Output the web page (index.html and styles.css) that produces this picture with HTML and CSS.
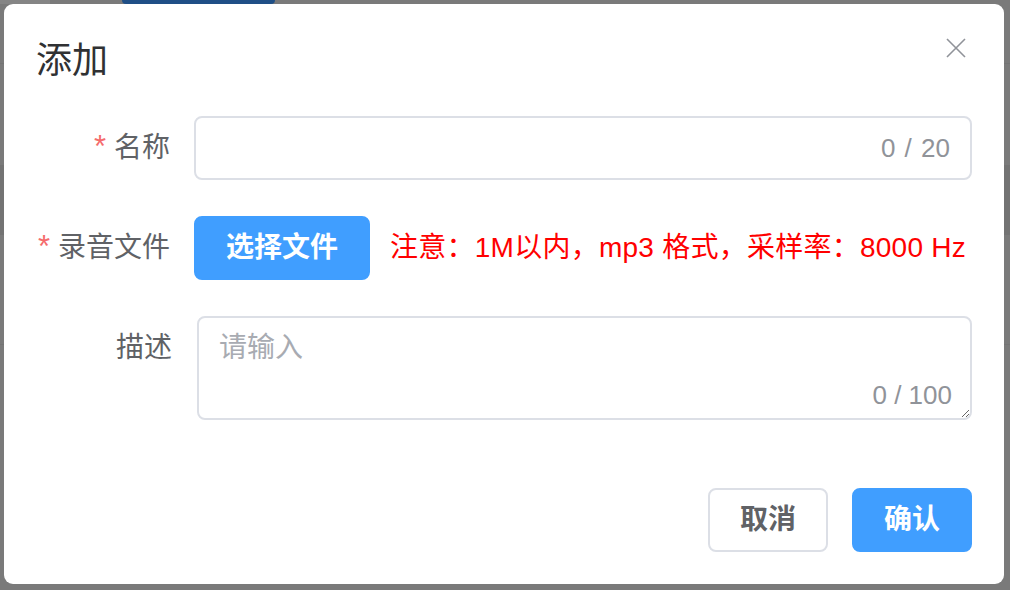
FILE: index.html
```html
<!DOCTYPE html>
<html lang="zh-CN">
<head>
<meta charset="utf-8">
<title>添加</title>
<link rel="stylesheet" href="styles.css">
</head>
<body>
<div class="page">
  <div class="page-top">
    <span class="page-tab"></span>
    <span class="page-btn"></span>
  </div>
  <div class="page-row page-row-a"></div>
  <div class="page-row page-row-b"></div>
  <div class="page-row page-row-c"></div>
</div>

<div class="overlay">
  <div class="dialog">
    <header class="dialog-header">
      <h2 class="dialog-title">添加</h2>
      <button class="dialog-close" type="button" aria-label="关闭">
        <svg width="20" height="20" viewBox="0 0 20 20"><path d="M1 1 L19 19 M19 1 L1 19" stroke="#909399" stroke-width="1.6" fill="none"/></svg>
      </button>
    </header>

    <form class="form">
      <div class="form-item">
        <label class="form-label is-required">名称</label>
        <div class="form-content">
          <div class="input">
            <input class="input-inner" type="text">
            <span class="input-count">0 / 20</span>
          </div>
        </div>
      </div>

      <div class="form-item">
        <label class="form-label is-required">录音文件</label>
        <div class="form-content form-content-inline">
          <button class="btn btn-primary" type="button">选择文件</button>
          <span class="upload-tip">注意：1M以内，mp3 格式，采样率：8000 Hz</span>
        </div>
      </div>

      <div class="form-item form-item-wide">
        <label class="form-label">描述</label>
        <div class="form-content">
          <div class="textarea">
            <textarea class="textarea-inner" placeholder="请输入"></textarea>
            <span class="textarea-count">0 / 100</span>
          </div>
        </div>
      </div>
    </form>

    <footer class="dialog-footer">
      <button class="btn btn-default" type="button">取消</button>
      <button class="btn btn-primary btn-footer" type="button">确认</button>
    </footer>
  </div>
</div>
</body>
</html>
```

FILE: styles.css
```css
* { box-sizing: border-box; }

html, body {
  margin: 0;
  padding: 0;
  width: 1010px;
  height: 590px;
  overflow: hidden;
}

body {
  background: #7a7a7a;
  font-family: "Liberation Sans", "Noto Sans CJK SC", sans-serif;
}

.page {
  display: flex;
  flex-direction: column;
  height: 590px;
}
.page-top {
  height: 64px;
  display: flex;
  align-items: flex-start;
  border-bottom: 1px solid #747474;
}
.page-tab {
  width: 50px;
  height: 4px;
  background: #858585;
}
.page-btn {
  width: 153px;
  height: 4px;
  margin-left: 72px;
  background: #1f4f86;
  border-radius: 0 0 4px 4px;
}
.page-row-a { height: 101px; }
.page-row-b { height: 70px; background: #737373; }
.page-row-c { height: 110px; border-bottom: 1px solid #747474; }

/* overlay + dialog */
.overlay {
  position: fixed;
  inset: 0;
  padding: 4px;
  display: flex;
  align-items: flex-start;
}
.dialog {
  width: 1000px;
  height: 580px;
  background: #ffffff;
  border-radius: 9px;
  padding: 0 32px 32px;
  display: flex;
  flex-direction: column;
}

.dialog-header {
  display: flex;
  justify-content: space-between;
  align-items: flex-start;
  padding-top: 33px;
}
.dialog-title {
  margin: 0;
  font-size: 36px;
  line-height: 48px;
  font-weight: normal;
  color: #303133;
}
.dialog-close {
  width: 20px;
  height: 20px;
  padding: 0;
  margin: 1px 6px 0 0;
  border: 0;
  background: none;
  display: flex;
}

/* form */
.form {
  margin-top: 31px;
  display: flex;
  flex-direction: column;
  gap: 36px;
}
.form-item {
  display: grid;
  grid-template-columns: 158px 1fr;
  align-items: start;
}
.form-item-wide {
  grid-template-columns: 161px 1fr;
}
.form-label {
  height: 64px;
  font-size: 28px;
  line-height: 64px;
  color: #606266;
  text-align: right;
  padding-right: 24px;
  white-space: nowrap;
}
.form-item-wide .form-label { padding-right: 25px; }
.form-label.is-required::before {
  content: "*";
  color: #f56c6c;
  font-size: 31px;
  line-height: 1;
  margin-right: 8px;
}

.form-content-inline {
  display: flex;
  align-items: center;
  gap: 20px;
}

.input {
  height: 64px;
  border: 2px solid #dcdfe6;
  border-radius: 8px;
  display: flex;
  align-items: center;
  padding: 0 20px 0 28px;
}
.input-inner {
  flex: 1;
  min-width: 0;
  border: 0;
  outline: none;
  font: inherit;
  font-size: 28px;
  color: #606266;
  background: transparent;
}
.input-count,
.textarea-count {
  font-size: 26px;
  line-height: 30px;
  color: #909399;
  white-space: nowrap;
}
.input-count {
  word-spacing: 2px;
}

.textarea {
  position: relative;
  height: 104px;
}
.textarea-inner {
  display: block;
  width: 100%;
  height: 104px;
  border: 2px solid #dcdfe6;
  border-radius: 8px;
  padding: 9px 20px;
  font: inherit;
  font-size: 28px;
  line-height: 42px;
  color: #606266;
  resize: vertical;
  outline: none;
}
.textarea-inner::placeholder { color: #a8abb2; }
.textarea-count {
  position: absolute;
  right: 20px;
  bottom: 10px;
}

.upload-tip {
  font-size: 28px;
  line-height: 40px;
  color: #ff0000;
  letter-spacing: 0.25px;
  white-space: nowrap;
}

/* buttons */
.btn {
  height: 64px;
  padding: 0 30px;
  border-radius: 8px;
  font: inherit;
  font-size: 28px;
  font-weight: 700;
  line-height: 1;
  cursor: pointer;
}
.btn-primary {
  background: #409eff;
  border: 2px solid #409eff;
  color: #ffffff;
}
.btn-default {
  background: #ffffff;
  border: 2px solid #dcdfe6;
  color: #606266;
}

.dialog-footer {
  margin-top: auto;
  display: flex;
  justify-content: flex-end;
  gap: 24px;
}
```
